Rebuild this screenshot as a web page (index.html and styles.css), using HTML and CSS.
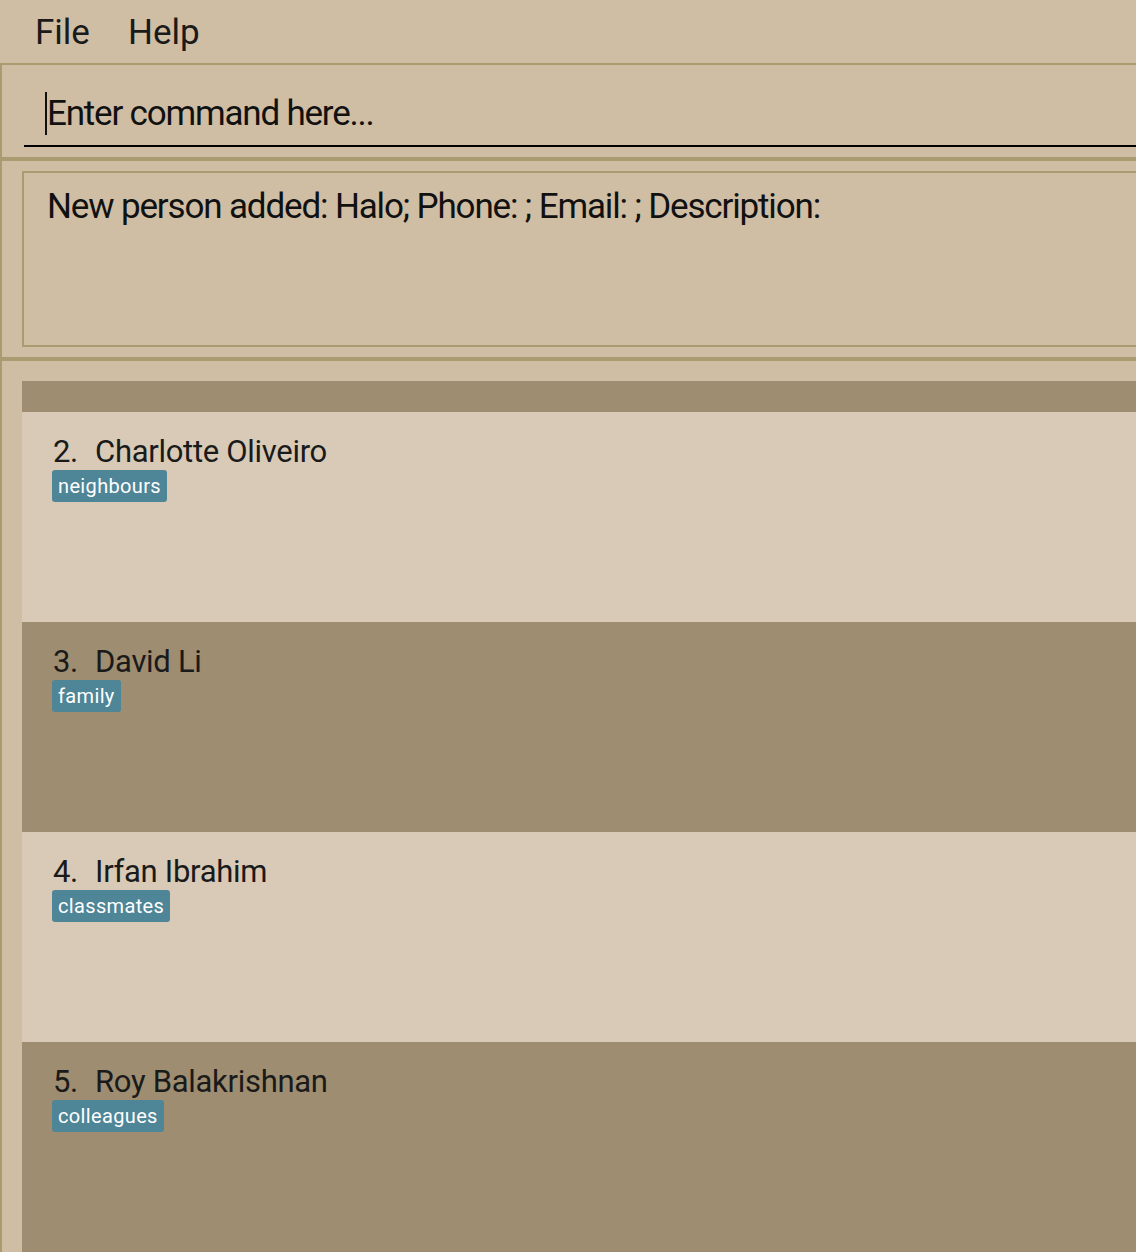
FILE: index.html
```html
<!DOCTYPE html>
<html>
<head>
<meta charset="utf-8">
<link rel="stylesheet" href="styles.css">
</head>
<body>
<div class="app">
  <div class="menubar">
    <span class="menu-item">File</span>
    <span class="menu-item">Help</span>
  </div>
  <div class="main">
    <div class="cmd-section">
      <div class="cmd-box">
        <span class="caret"></span><span class="placeholder">Enter command here...</span>
      </div>
    </div>
    <div class="result-section">
      <div class="result-box">New person added: Halo; Phone: ; Email: ; Description:</div>
    </div>
    <div class="list-section">
      <div class="list">
        <div class="list-head"></div>
        <div class="card card-light">
          <div class="name"><span class="idx">2.</span><span>Charlotte Oliveiro</span></div>
          <div class="tags"><span class="tag">neighbours</span></div>
        </div>
        <div class="card card-dark">
          <div class="name"><span class="idx">3.</span><span>David Li</span></div>
          <div class="tags"><span class="tag">family</span></div>
        </div>
        <div class="card card-light">
          <div class="name"><span class="idx">4.</span><span>Irfan Ibrahim</span></div>
          <div class="tags"><span class="tag">classmates</span></div>
        </div>
        <div class="card card-dark">
          <div class="name"><span class="idx">5.</span><span>Roy Balakrishnan</span></div>
          <div class="tags"><span class="tag">colleagues</span></div>
        </div>
      </div>
    </div>
  </div>
</div>
</body>
</html>
```
FILE: styles.css
```css
html, body {
  margin: 0;
  padding: 0;
}
body {
  background: #cfbea4;
  font-family: Roboto, "Noto Sans", sans-serif;
  color: #111;
  width: 1136px;
  height: 1252px;
  overflow: hidden;
}
.app {
  display: flex;
  flex-direction: column;
  height: 1252px;
}
.menubar {
  height: 64px;
  border-bottom: 2px solid #a89c70;
  display: flex;
  align-items: center;
  padding-left: 35px;
  gap: 38px;
  font-size: 35px;
  color: #1a1a1a;
}
.menu-item {
  position: relative;
  top: 1px;
}
.main {
  flex: 1;
  border-left: 2px solid #a89c70;
  display: flex;
  flex-direction: column;
}
.cmd-section {
  height: 96px;
  padding-left: 22px;
  border-bottom: 4px solid #a89c70;
  box-sizing: border-box;
  display: flex;
  flex-direction: column;
  justify-content: flex-end;
  padding-bottom: 10px;
}
.cmd-box {
  height: 66px;
  border-bottom: 2px solid #000;
  display: flex;
  align-items: center;
  padding-left: 21px;
  font-size: 35px;
  letter-spacing: -1.2px;
  color: #111;
  box-sizing: border-box;
}
.caret {
  width: 2px;
  height: 43px;
  background: #111;
}
.result-section {
  padding: 10px 0 10px 20px;
  border-bottom: 4px solid #a89c70;
}
.result-box {
  height: 176px;
  box-sizing: border-box;
  border: 2px solid #a89c70;
  border-right: none;
  padding: 13px 0 0 23px;
  font-size: 35px;
  letter-spacing: -1.15px;
  color: #111;
  line-height: 42px;
}
.list-section {
  flex: 1;
  padding: 20px 0 0 20px;
  overflow: hidden;
}
.list-head {
  height: 31px;
  background: #9e8d70;
}
.card {
  height: 210px;
  box-sizing: border-box;
  padding: 22px 0 0 31px;
}
.card-light {
  background: #d8cab6;
}
.card-dark {
  background: #9e8d70;
}
.name {
  font-size: 31px;
  line-height: 36px;
  color: #1a1a1a;
  letter-spacing: -0.3px;
  display: flex;
  gap: 17px;
}
.tags {
  display: flex;
}
.tag {
  background: #4e8597;
  color: #fff;
  font-size: 20px;
  letter-spacing: 0.35px;
  line-height: 32px;
  height: 32px;
  padding: 0 6px;
  border-radius: 3px;
  margin-left: -1px;
}
```
